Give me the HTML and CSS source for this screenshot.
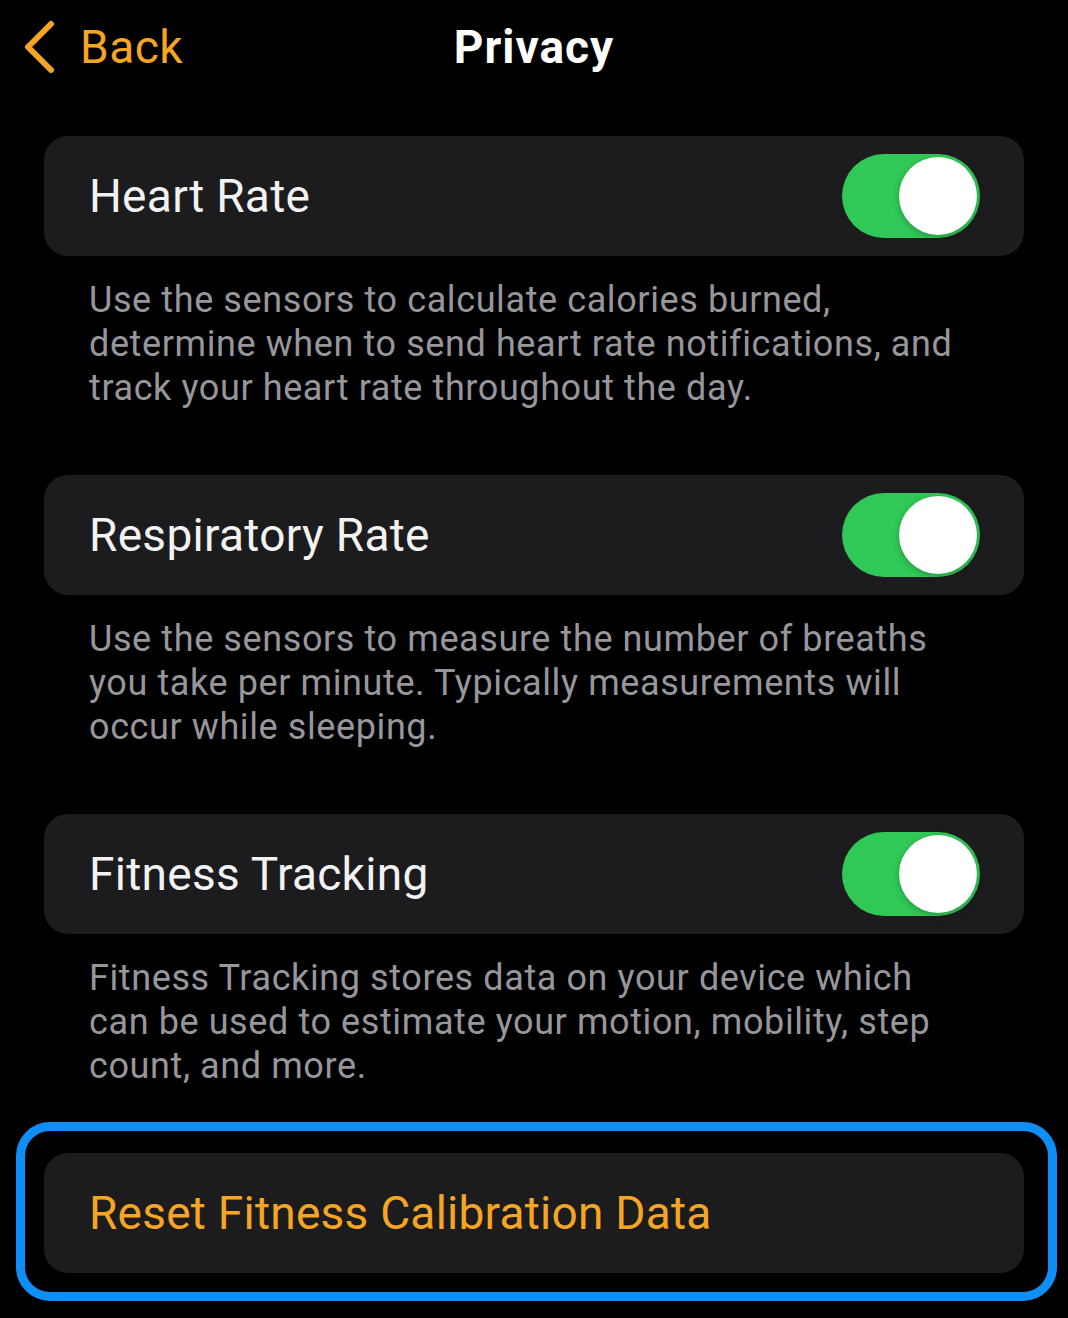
FILE: index.html
```html
<!DOCTYPE html>
<html lang="en">
<head>
<meta charset="utf-8">
<title>Privacy</title>
<link rel="stylesheet" href="styles.css">
</head>
<body>
<div class="screen">
  <header class="nav">
    <a class="nav-back" href="#">
      <svg class="chevron" width="34" height="54" viewBox="0 0 34 54" aria-hidden="true">
        <path d="M29 4 L6 27 L29 50" fill="none" stroke="currentColor" stroke-width="6" stroke-linecap="round" stroke-linejoin="round"/>
      </svg>
      <span>Back</span>
    </a>
    <h1 class="nav-title">Privacy</h1>
  </header>

  <main class="list">
    <section class="group">
      <div class="cell">
        <span class="cell-label">Heart Rate</span>
        <span class="switch is-on" role="switch" aria-checked="true"><span class="switch-knob"></span></span>
      </div>
      <p class="footer">Use the sensors to calculate calories burned, determine when to send heart rate notifications, and track your heart rate throughout the day.</p>
    </section>

    <section class="group">
      <div class="cell">
        <span class="cell-label">Respiratory Rate</span>
        <span class="switch is-on" role="switch" aria-checked="true"><span class="switch-knob"></span></span>
      </div>
      <p class="footer">Use the sensors to measure the number of breaths you take per minute. Typically measurements will occur while sleeping.</p>
    </section>

    <section class="group">
      <div class="cell">
        <span class="cell-label">Fitness Tracking</span>
        <span class="switch is-on" role="switch" aria-checked="true"><span class="switch-knob"></span></span>
      </div>
      <p class="footer">Fitness Tracking stores data on your device which can be used to estimate your motion, mobility, step count, and more.</p>
    </section>

    <section class="group group-action">
      <div class="cell cell-action highlighted">
        <span class="cell-label action">Reset Fitness Calibration Data</span>
      </div>
    </section>
  </main>
</div>
</body>
</html>
```

FILE: styles.css
```css
html, body {
  margin: 0;
  padding: 0;
  background: #000;
}

body {
  font-family: Roboto, "Noto Sans", "Liberation Sans", sans-serif;
  color: #fff;
  -webkit-font-smoothing: antialiased;
}

.screen {
  width: 1068px;
  min-height: 1318px;
  box-sizing: border-box;
}

/* navigation bar */
.nav {
  position: relative;
  height: 96px;
  display: flex;
  align-items: center;
  justify-content: center;
}

.nav-back {
  position: absolute;
  left: 22px;
  top: 20px;
  display: flex;
  align-items: center;
  gap: 24px;
  color: #f4a524;
  text-decoration: none;
  font-size: 46px;
  letter-spacing: 0.5px;
  line-height: 54px;
}

.chevron {
  display: block;
}

.nav-title {
  margin: 0;
  font-size: 46px;
  font-weight: 700;
  letter-spacing: 1px;
  line-height: 54px;
  margin-top: -2px;
}

/* grouped list */
.list {
  padding: 40px 44px 0;
}

.group {
  margin: 0;
}

.cell {
  height: 120px;
  box-sizing: border-box;
  background: #1c1c1e;
  border-radius: 24px;
  padding: 0 44px 0 45px;
  display: flex;
  align-items: center;
  justify-content: space-between;
}

.cell-label {
  font-size: 46px;
  letter-spacing: 0.3px;
  color: #f2f2f2;
}

.cell-label.action {
  color: #f4a524;
  letter-spacing: 0.25px;
}

.footer {
  margin: 0;
  padding: 22px 50px 65px 45px;
  font-size: 36px;
  letter-spacing: 0.6px;
  line-height: 44px;
  color: #97979b;
}

/* toggle switch */
.switch {
  width: 138px;
  height: 84px;
  border-radius: 42px;
  background: #e5e5ea;
  box-sizing: border-box;
  padding: 3px;
  display: flex;
}

.switch.is-on {
  background: #30c856;
  justify-content: flex-end;
}

.switch-knob {
  width: 78px;
  height: 78px;
  border-radius: 50%;
  background: #fff;
  box-shadow: 0 2px 6px rgba(0, 0, 0, 0.25);
}

/* highlight ring around the reset row */
.highlighted {
  position: relative;
}

.highlighted::after {
  content: "";
  position: absolute;
  left: -28px;
  top: -31px;
  right: -33px;
  bottom: -28px;
  border: 9px solid #0f8ff5;
  border-radius: 34px;
  pointer-events: none;
}
```
